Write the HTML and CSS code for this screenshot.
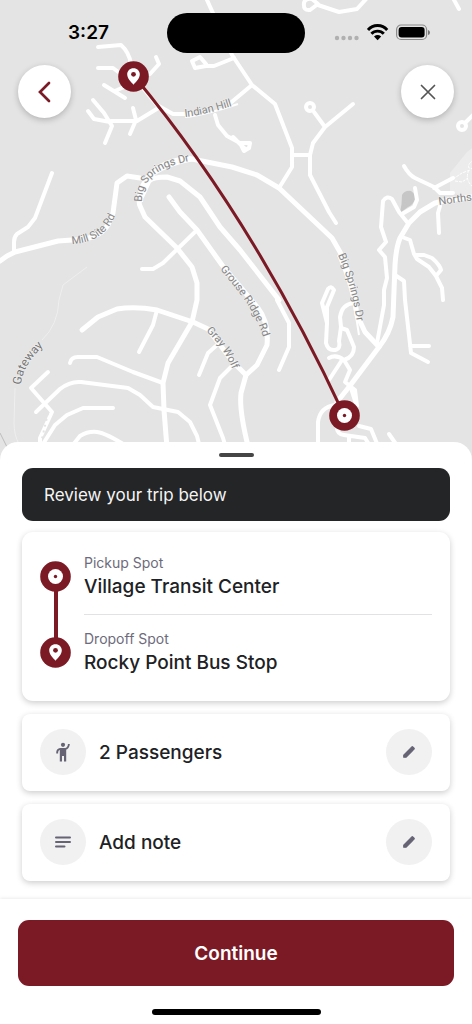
FILE: index.html
```html
<!DOCTYPE html>
<html lang="en">
<head>
<meta charset="utf-8">
<meta name="viewport" content="width=device-width, initial-scale=1">
<title>Review trip</title>
<link rel="stylesheet" href="styles.css">
</head>
<body>
<svg class="symbols" aria-hidden="true">
  <symbol id="stop-dot" viewBox="0 0 31 31">
    <circle cx="15.500" cy="15.500" r="15.300" fill="#7b1a25"/>
    <circle cx="15.500" cy="15.500" r="7.500" fill="#fff"/>
    <circle cx="15.500" cy="15.500" r="1.700" fill="#7b1a25"/>
  </symbol>
  <symbol id="stop-pin" viewBox="0 0 31 31">
    <circle cx="15.500" cy="15.500" r="15.300" fill="#7b1a25"/>
    <path d="M15.500 7.200C11.800 7.200 9.200 9.900 9.200 13.300C9.200 17.600 13 20.700 15.500 23.800C18 20.700 21.800 17.600 21.800 13.300C21.800 9.900 19.200 7.200 15.500 7.200Z" fill="#fff"/>
    <circle cx="15.500" cy="13.300" r="2.400" fill="#7b1a25"/>
  </symbol>
  <symbol id="pencil" viewBox="0 0 24 24">
    <path d="M3 17.250V21h3.750L17.810 9.940l-3.750-3.750L3 17.250zM20.710 7.040a1 1 0 0 0 0-1.410l-2.340-2.340a1 1 0 0 0-1.410 0l-1.830 1.830 3.750 3.750 1.830-1.830z" fill="currentColor" stroke="currentColor" stroke-width="2" stroke-linejoin="round"/>
  </symbol>
</svg>
<main class="screen">
  <section class="map" aria-label="Trip map">
    <svg class="map-canvas" viewBox="0 0 472 460" preserveAspectRatio="xMidYMin slice">
      <path class="park" d="M450 192V173L467 152L480 142V200Z"/>
      <path class="water" d="M402 195Q405 190 411 191Q416 194 415 199Q413 205 408 207L400 213Q402 204 402 195Z"/>
      <path class="trail" d="M87 267L63 285L59 300Q58 325 42 340M15 388L14 423Q14 435 19 444"/>
      <path class="rail" d="M0 433L8 449"/>
      <path class="path-dashed" d="M453 179L462 173L470 170M455 181L462 182L468 178M474 160Q467 164 469 168Q474 170 474 166M469 170Q464 180 474 188"/>
      <g class="roads">
        <path d="M98 47L121 45Q129 52 131 64M98 68L113 68L121 74M156 57L159 64L150 74M104 85L125 98M115 91L124 87"/>
        <path d="M93 100L104 113L112 126L105 143M88 111L94 119L110 122M111 121L137 121L160 107M133 108L136 120L130 134"/>
        <path d="M143 88L157 105L173 114H190M228 105L252 85M207 0L212 11L232 55L252 85L275 104L292 148V167L279 188"/>
        <path d="M192 61L200 57L206 64L206 66L195 68ZM206 66H214L234 58M215 115L218 125L227 136L240 143M240 143H250L249 148L244 151ZM233 137L245 149"/>
        <path d="M304 3Q305 -2 312 -1L318 4L310 10Q303 11 304 3ZM318 5L339 12L357 9L367 -2M453 -2L459 9"/>
        <circle cx="310" cy="107" r="4"/>
        <path d="M314 112L325 127L353 104M325 127L313 143L310 155V175L329 212L336 223M292 155H310"/>
        <circle cx="462" cy="126" r="4"/>
        <path d="M465 123L474 114"/>
        <path d="M52 173L35 218L28 227L17 234Q14 237 14 242V252M142 269H153L163 263L197 230"/>
        <path d="M70 363Q71 357 78 357H97L133 372L163 383M157 310L153 325L139 352M217 345L208 353L199 375"/>
        <path d="M36 412L60 389Q70 381 81 382L128 388L140 395L153 407L178 412L190 422L197 436L200 448"/>
        <path d="M48 372L31 388L52 412L40 438V448M113 408H83L67 415L55 425L43 444M72 446L80 436Q88 431 97 432Q106 433 128 447"/>
        <path d="M233 365L220 378L210 405L223 438L226 448M277 300L289 323V347L279 370"/>
        <path d="M404 166Q409 175 415 178L434 187L440 193H453M434 188L453 178M415 188L417 200L414 207L402 214M440 206L438 213L439 233"/>
        <path d="M407 222L399 212L392 199Q387 195 383 201L381 227L386 242L379 250L385 257L387 278L384 290V305L377 343"/>
        <path d="M402 237L410 240L414 254L417 259L429 267L436 276L441 270Q440 265 432 258L424 255H416M436 276L442 288L443 300"/>
        <path d="M395 275L404 281L405 300L409 335L411 353L428 362M410 346H429"/>
        <path d="M322 303L328 289Q331 285 334 290L327 307V323L326 343Q328 351 335 350Q341 349 339 341L341 327L340 317Q342 304 354 303M322 303L327 323M341 328L347 330L354 347Q354 357 344 360Q336 354 329 358M342 360L329 380M344 360L350 370L345 382L355 390L357 406M350 385L356 404"/>
        <path d="M335 405Q320 407 318 422V448M359 426L371 429L378 446M337 428Q337 434 344 435L365 438L370 446M349 437V446M389 434L398 447"/>
      </g>
      <g class="roads roads-major">
        <path d="M0 261L7 256L15 252L58 241L72 240Q98 240 108 225L113 213L117 183L127 176L140 178"/>
        <path d="M187 158L174 161Q149 168 141 190Q138 202 140 206L145 217L177 248L192 267L197 283V300L192 322L168 363L163 383L164 410L167 448"/>
        <path d="M187 158L232 167L257 175L279 188L332 238L340 252Q353 280 357 315L365 332L379 347"/>
        <path d="M142 196L149 181Q153 177 167 177L180 181L200 197L220 227L240 250L279 300"/>
        <path d="M169 197L180 212L197 230L222 265L258 308Q269 322 267 345L257 365L246 375L241 393Q239 410 248 446"/>
        <path d="M82 330L98 317L117 309Q135 306 157 310L193 322L208 329L233 362L246 375"/>
        <path d="M472 197L448 200L435 203L420 212L409 223L400 238Q396 248 395 265L393 317Q390 333 379 347L349 387L337 402"/>
      </g>
      <path class="road-dots" d="M48 413L41 443"/>
      <defs>
        <path id="street-indian" d="M185 117Q205 115 238 104"/>
        <path id="street-springs-a" d="M142 202C142 180 155 167 195 160"/>
        <path id="street-mill" d="M72 244C95 243 112 232 119 204"/>
        <path id="street-springs-b" d="M338 255C347 276 353 294 359 335"/>
        <path id="street-grouse" d="M220 269C238 292 257 310 266 348"/>
        <path id="street-gray" d="M206 331C217 341 227 354 236 378"/>
        <path id="street-gateway" d="M21 385C22 368 34 355 48 341"/>
        <path id="street-north" d="M439 205L490 198"/>
      </defs>
      <g class="street-halos">
        <use href="#street-indian"/><use href="#street-springs-a"/><use href="#street-springs-b"/>
      </g>
      <g class="street-names">
        <text><textPath href="#street-indian">Indian Hill</textPath></text>
        <text><textPath href="#street-springs-a">Big Springs Dr</textPath></text>
        <text><textPath href="#street-mill">Mill Site Rd</textPath></text>
        <text><textPath href="#street-springs-b">Big Springs Dr</textPath></text>
        <text><textPath href="#street-grouse">Grouse Ridge Rd</textPath></text>
        <text><textPath href="#street-gray">Gray Wolf</textPath></text>
        <text class="street-main"><textPath href="#street-gateway">Gateway</textPath></text>
        <text><textPath href="#street-north">Norths</textPath></text>
      </g>
      <path class="route" d="M134 76Q253 219 344 415"/>
      <use href="#stop-pin" x="118" y="61" width="31" height="31"/>
      <use href="#stop-dot" x="329" y="400" width="31" height="31"/>
    </svg>
    <header class="status-bar">
      <time class="clock">3:27</time>
      <span class="island"></span>
      <svg class="status-icons" viewBox="0 0 97 18" aria-label="Wi-Fi connected, battery full">
        <g fill="#b0b0b0"><circle cx="3" cy="14" r="2.200"/><circle cx="9.500" cy="14" r="2.200"/><circle cx="16" cy="14" r="2.200"/><circle cx="22.500" cy="14" r="2.200"/></g>
        <g fill="none" stroke="#000" stroke-width="2.900"><path d="M34 6A12.500 12.500 0 0 1 53.200 6"/><path d="M37.400 9.800A8.500 8.500 0 0 1 49.800 9.800"/></g>
        <path d="M40 12.400Q43.600 9.600 47.200 12.400L43.600 16.200Z"/>
        <rect x="62.600" y="1" width="30" height="14.500" rx="4.500" fill="none" stroke="#8b8b8b" stroke-width="1.200"/>
        <rect x="64.600" y="3" width="26" height="10.500" rx="3"/>
        <path d="M94 6Q96 6.500 96 8.500T94 11Z" fill="#777"/>
      </svg>
    </header>
    <nav class="map-actions">
      <button class="round-button back" type="button" aria-label="Back">
        <svg width="14" height="22" viewBox="0 0 14 22"><path d="M11 2L2 11L11 20" stroke-width="2.700"/></svg>
      </button>
      <button class="round-button close" type="button" aria-label="Close">
        <svg width="16" height="16" viewBox="0 0 16 16"><path d="M1.500 1.500L14.500 14.500M14.500 1.500L1.500 14.500" stroke-width="1.700"/></svg>
      </button>
    </nav>
  </section>

  <section class="sheet">
    <div class="handle"></div>
    <h1 class="banner">Review your trip below</h1>
    <div class="card stops">
      <div class="stop-line" aria-hidden="true">
        <svg class="stop-icon"><use href="#stop-dot"/></svg>
        <span class="connector"></span>
        <svg class="stop-icon"><use href="#stop-pin"/></svg>
      </div>
      <dl class="stop-list">
        <div class="stop"><dt>Pickup Spot</dt><dd>Village Transit Center</dd></div>
        <div class="stop"><dt>Dropoff Spot</dt><dd>Rocky Point Bus Stop</dd></div>
      </dl>
    </div>
    <div class="card option">
      <span class="option-icon">
        <svg width="20" height="20" viewBox="0 0 20 20"><circle cx="10" cy="2.800" r="2.100"/><path d="M4.200 11.500V10Q4.400 7.200 7.400 6.900H12.200Q15.500 6.400 15.900 2" fill="none" stroke="currentColor" stroke-width="1.900"/><path d="M6.800 6H13.200V19.500H11V14H9V19.500H6.800Z"/></svg>
      </span>
      <span class="option-name">2 Passengers</span>
      <button class="edit" type="button" aria-label="Edit passengers"><svg width="14" height="14"><use href="#pencil"/></svg></button>
    </div>
    <div class="card option">
      <span class="option-icon">
        <svg width="18" height="14" viewBox="0 0 18 14"><path d="M2 2.500H16M2 7H16M2 11.500H10.500" fill="none" stroke="currentColor" stroke-width="2" stroke-linecap="round"/></svg>
      </span>
      <span class="option-name">Add note</span>
      <button class="edit" type="button" aria-label="Edit note"><svg width="14" height="14"><use href="#pencil"/></svg></button>
    </div>
  </section>

  <footer class="footer">
    <button class="continue" type="button">Continue</button>
    <div class="home-indicator"></div>
  </footer>
</main>
</body>
</html>
```
FILE: styles.css
```css
* {
  box-sizing: border-box;
}

body {
  margin: 0;
  background: #fff;
  color: #202124;
  font-family: Inter, "Liberation Sans", sans-serif;
}

button {
  padding: 0;
  border: 0;
  font: inherit;
  cursor: pointer;
}

.symbols {
  position: absolute;
  width: 0;
  height: 0;
}

.screen {
  display: flex;
  flex-direction: column;
  min-height: 100vh;
}

/* Map */
.map {
  position: relative;
  flex: 1 0 320px;
  overflow: hidden;
  background: #e4e4e4;
}

.map-canvas {
  position: absolute;
  inset: 0;
  width: 100%;
  height: 100%;
}

.park { fill: #ececec; }
.water { fill: #c6c6c6; }

.trail,
.rail,
.path-dashed,
.road-dots,
.roads,
.street-halos,
.route {
  fill: none;
}

.trail { stroke: #efefef; stroke-width: 1; }
.rail { stroke: #bdbdbd; stroke-width: 1; }
.path-dashed { stroke: #fff; stroke-width: 1; stroke-dasharray: 3 1; }
.road-dots { stroke: #e4e4e4; stroke-width: 2; stroke-dasharray: 2 4; }

.roads {
  stroke: #fff;
  stroke-width: 4;
  stroke-linecap: round;
  stroke-linejoin: round;
}

.roads-major { stroke-width: 5; }

.street-halos { stroke: #fff; stroke-width: 2; }

.route { stroke: #7b1a25; stroke-width: 3; }

.street-names {
  fill: #868686;
  stroke: #f3f3f3;
  stroke-width: 1px;
  stroke-linejoin: round;
  paint-order: stroke;
  font-family: Roboto, "Liberation Sans", sans-serif;
  font-size: 11px;
}

.street-main { fill: #757575; font-size: 12px; }

.status-bar {
  position: relative;
  display: grid;
  grid-template-columns: 1fr 138px 1fr;
  align-items: center;
  padding-top: 13px;
}

.clock {
  padding-left: 10px;
  color: #000;
  font-size: 19px;
  font-weight: 600;
  line-height: 40px;
  text-align: center;
}

.island {
  height: 40px;
  border-radius: 20px;
  background: #000;
}

.status-icons {
  width: 97px;
  height: 18px;
  margin-left: 29px;
}

.map-actions {
  position: relative;
  display: flex;
  justify-content: space-between;
  padding: 12px 18px;
}

.round-button {
  display: grid;
  place-items: center;
  width: 53px;
  height: 53px;
  border-radius: 50%;
  background: #fff;
  box-shadow: 0 2px 6px rgba(0, 0, 0, 0.22);
}

.round-button svg {
  fill: none;
  stroke-linecap: round;
}

.back svg { stroke: #7b1a25; }
.close svg { stroke: #555; }

/* Bottom sheet */
.sheet {
  position: relative;
  display: flex;
  flex-direction: column;
  gap: 13px;
  margin-top: -18px;
  padding: 11px 22px 18px;
  border-radius: 18px 18px 0 0;
  background: #fff;
}

.handle {
  align-self: center;
  width: 35px;
  height: 4px;
  margin-bottom: -2px;
  border-radius: 2px;
  background: #454545;
}

.banner {
  margin: 0 0 -2px;
  padding: 15px 22px 14px;
  border-radius: 11px;
  background: #232527;
  color: #f4f4f4;
  font-size: 17px;
  font-weight: 400;
  line-height: 24px;
}

.card {
  border-radius: 8px;
  background: #fff;
  box-shadow: 0 2px 6px rgba(0, 0, 0, 0.2);
}

.stops {
  display: flex;
  gap: 13px;
  padding: 17px 18px 16px;
  border-radius: 11px;
}

.stop-line {
  display: flex;
  flex-direction: column;
  align-items: center;
  padding: 12px 0 17px;
}

.stop-icon {
  width: 31px;
  height: 31px;
}

.connector {
  flex: 1;
  width: 4px;
  margin: -1px 0;
  background: #7b1a25;
}

.stop-list {
  flex: 1;
  margin: 0;
}

.stop {
  padding: 4px 0 13px;
}

.stop + .stop {
  padding: 14px 0 8px;
  border-top: 1px solid #e2e2e4;
}

.stop dt {
  color: #6d6b7b;
  font-size: 14px;
  line-height: 20px;
}

.stop dd {
  margin: 0;
  font-size: 19px;
  font-weight: 500;
  line-height: 28px;
}

.option {
  display: flex;
  align-items: center;
  gap: 13px;
  padding: 15px 18px 16px;
}

.option-icon,
.edit {
  display: grid;
  place-items: center;
  width: 46px;
  height: 46px;
  border-radius: 50%;
  background: #f1f1f1;
  color: #656374;
}

.option-icon svg { fill: currentColor; }

.option-name {
  flex: 1;
  padding-top: 2px;
  font-size: 19px;
  font-weight: 500;
  line-height: 28px;
}

/* Footer */
.footer {
  position: relative;
  padding: 21px 18px 9px;
  background: #fff;
  box-shadow: 0 -1px 3px rgba(0, 0, 0, 0.08);
}

.continue {
  display: block;
  width: 100%;
  height: 66px;
  border-radius: 11px;
  background: #7b1a25;
  color: #fff;
  font-size: 19px;
  font-weight: 600;
}

.home-indicator {
  width: 169px;
  height: 6px;
  margin: 23px auto 0;
  border-radius: 3px;
  background: #000;
}
```
